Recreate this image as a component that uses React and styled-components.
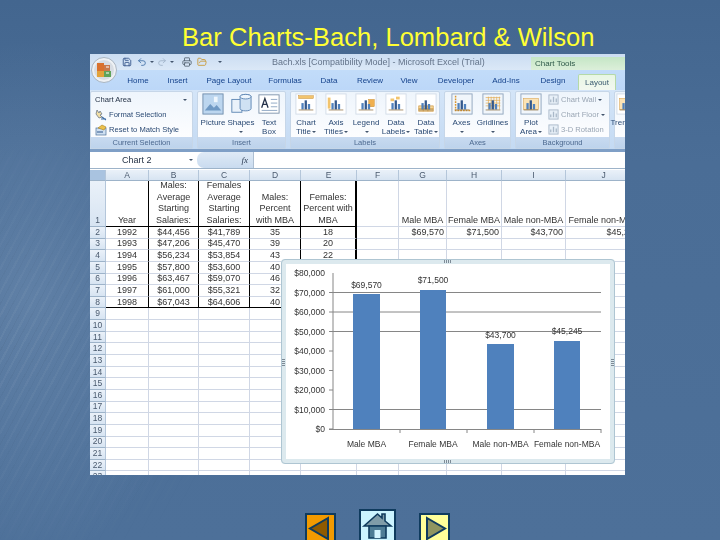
import React from "react";
import styled, { createGlobalStyle } from "styled-components";
import { Save, Undo2, Redo2, Printer, FolderOpen } from "lucide-react";

const GlobalStyle = createGlobalStyle`
  html, body {
    margin: 0;
    padding: 0;
    background: #4a6c95;
  }
`;

const Page = styled.div`
  position: relative;
  width: 720px;
  height: 540px;
  overflow: hidden;
  display: flex;
  flex-direction: column;
  font-family: "Liberation Sans", Arial, sans-serif;
  background-color: #4a6d96;
  background-image:
    radial-gradient(ellipse 170px 260px at 30px 300px, rgba(150, 175, 205, 0.28), rgba(150, 175, 205, 0) 100%),
    linear-gradient(180deg, #43668f 0%, #4a6d96 30%, #4d7099 100%);

  /* the streaks of the slide texture only show at the lower left */
  &::before {
    content: "";
    position: absolute;
    left: 0;
    top: 150px;
    width: 280px;
    height: 390px;
    background: repeating-linear-gradient(118deg, rgba(255, 255, 255, 0.05) 0 2px, rgba(255, 255, 255, 0) 2px 6px, rgba(0, 0, 0, 0.03) 6px 7px, rgba(255, 255, 255, 0) 7px 11px);
    -webkit-mask-image: radial-gradient(ellipse 100% 60% at 0% 50%, #000, transparent);
    mask-image: radial-gradient(ellipse 100% 60% at 0% 50%, #000, transparent);
  }
`;

const Title = styled.h1`
  margin: 0;
  height: 54px;
  flex: none;
  padding: 23px 0 0 182px;
  box-sizing: border-box;
  font-size: 25.6px;
  line-height: 28px;
  font-weight: 400;
  color: #ffff33;
  white-space: nowrap;
`;

const Window = styled.div`
  width: 535px;
  height: 421px;
  margin-left: 90px;
  position: relative;
  overflow: hidden;
  display: flex;
  flex-direction: column;
  flex: none;
  background: #fff;
  filter: blur(0.35px);
`;

const TitleBar = styled.div`
  height: 16px;
  flex: none;
  display: flex;
  align-items: center;
  padding-left: 32px;
  background: linear-gradient(180deg, #cbddf2, #dbe8f7);
  font-size: 9px;
  color: #64748a;
  white-space: nowrap;
`;

const QuickAccess = styled.div`
  display: flex;
  align-items: center;
  width: 150px;
  flex: none;
`;

const QatIcon = styled.span`
  display: flex;
  margin-left: ${(p) => p.$gap || 0}px;
`;

const DocName = styled.div`
  width: 259px;
  flex: none;
`;

const ToolsLabel = styled.div`
  align-self: stretch;
  flex: 1;
  margin-top: 3px;
  padding: 1px 0 0 4px;
  background: linear-gradient(180deg, #c5e6c6, #dcefd9);
  color: #2f5a4a;
  font-size: 8px;
  line-height: 12px;
`;

const TabRow = styled.div`
  height: 20px;
  flex: none;
  display: flex;
  align-items: flex-end;
  padding-left: 28px;
  background: linear-gradient(180deg, #c2dcf9, #bcd7f8);
`;

const Tab = styled.div`
  width: ${(p) => p.$w}px;
  height: ${(p) => (p.$active ? 16 : 20)}px;
  margin-left: ${(p) => p.$gap || 0}px;
  display: flex;
  align-items: center;
  justify-content: center;
  flex: none;
  box-sizing: border-box;
  font-size: 8px;
  color: #15428b;
  ${(p) =>
    p.$active &&
    `
    border: 1px solid #b5d9a8;
    border-bottom: none;
    border-radius: 2px 2px 0 0;
    background: linear-gradient(180deg, #e8f6e4, #f2f8f0);
    color: #3a5a70;
  `}
`;

const OfficeButton = styled.div`
  position: absolute;
  left: 1px;
  top: 3px;
  width: 26px;
  height: 26px;
`;

const Ribbon = styled.div`
  height: 58px;
  flex: none;
  display: flex;
  gap: 4px;
  padding: 1px 0 0 0;
  background: linear-gradient(180deg, #d4e5f8, #c4daf3);
`;

const Group = styled.div`
  width: ${(p) => p.$w}px;
  flex: none;
  display: flex;
  flex-direction: column;
  box-sizing: border-box;
  border: 1px solid #c6d6e8;
  border-radius: 2px;
  background: linear-gradient(180deg, #eef5fc, #f9fbfe 60%, #fff);
`;

const GroupBody = styled.div`
  flex: 1;
  display: flex;
  padding-left: ${(p) => p.$pad || 0}px;
`;

const GroupLabel = styled.div`
  height: 11px;
  flex: none;
  background: linear-gradient(180deg, #c8daf0, #bdd3ec);
  color: #4d6a90;
  font-size: 7.5px;
  line-height: 11px;
  text-align: center;
`;

const SmallColumn = styled.div`
  display: flex;
  flex-direction: column;
  gap: 2px;
  padding: 1px 0 0 ${(p) => p.$pad || 2}px;
`;

const SmallRow = styled.div`
  height: 13px;
  display: flex;
  align-items: center;
  gap: 2px;
  font-size: 7.6px;
  white-space: nowrap;
  color: ${(p) => (p.$muted ? "#9aa6b4" : "#2b4a74")};
`;

const AreaSelect = styled(SmallRow)`
  justify-content: space-between;
  width: 92px;
  color: #1e2c40;
`;

const BigButton = styled.div`
  width: ${(p) => p.$w}px;
  flex: none;
  display: flex;
  flex-direction: column;
  align-items: center;
  padding-top: 1px;
  font-size: 8px;
  line-height: 9px;
  color: #2b4a74;
  white-space: nowrap;
  svg {
    margin-bottom: 3px;
  }
`;

const Caret = styled.span`
  display: inline-block;
  width: 0;
  height: 0;
  flex: none;
  margin-left: ${(p) => p.$gap || 0}px;
  vertical-align: 1px;
  border-left: 2px solid transparent;
  border-right: 2px solid transparent;
  border-top: 2px solid #43556d;
`;

const FormulaBar = styled.div`
  height: 20px;
  flex: none;
  display: flex;
  box-sizing: border-box;
  border-top: 3px solid #7f9fc6;
  border-bottom: 1px solid #9db3c9;
  background: #fff;
`;

const NameBox = styled.div`
  width: 107px;
  flex: none;
  display: flex;
  align-items: center;
  justify-content: space-between;
  box-sizing: border-box;
  padding: 0 4px 0 32px;
  font-size: 9px;
  color: #1e2c40;
`;

const FormulaButtons = styled.div`
  width: 57px;
  flex: none;
  display: flex;
  align-items: center;
  justify-content: flex-end;
  box-sizing: border-box;
  padding-right: 5px;
  border-right: 1px solid #aebfd2;
  border-radius: 7px 0 0 7px;
  background: linear-gradient(180deg, #dfeaf6, #c9dbef);
  font-family: "Liberation Serif", serif;
  font-style: italic;
  font-size: 9px;
  color: #2e3e55;
`;

const Sheet = styled.div`
  position: relative;
  flex: 1;
  overflow: hidden;
  display: grid;
  grid-template-columns: 16px 43px 50px 51px 51px 56px 42px 48px 55px 64px 76px;
  grid-template-rows: 11px 46px;
  grid-auto-rows: 11.65px;
  margin-top: 1px;
  font-size: 9px;
  color: #333;
`;

const HeadCell = styled.div`
  box-sizing: border-box;
  display: flex;
  align-items: center;
  justify-content: center;
  overflow: hidden;
  border-right: 1px solid #b4c6da;
  border-bottom: 1px solid #9db3c9;
  background: ${(p) => (p.$corner ? "#a9c3e0" : "linear-gradient(180deg, #eaf1f9, #d7e4f2)")};
  color: #4a5a6e;
  font-size: 8.5px;
`;

const RowHead = styled(HeadCell)`
  align-items: ${(p) => (p.$tall ? "flex-end" : "center")};
  line-height: 11px;
`;

const Cell = styled.div`
  box-sizing: border-box;
  display: flex;
  align-items: center;
  justify-content: ${(p) => p.$align || "center"};
  padding: 0 ${(p) => (p.$align === "flex-end" ? 2 : 0)}px;
  white-space: nowrap;
  line-height: 11px;
  border-right: ${(p) => (p.$thick ? "2px solid #000" : p.$ruled ? "1px solid #000" : "1px solid #d0d7e5")};
  border-bottom: ${(p) => (p.$ruled === "bottom" ? "1px solid #000" : "1px solid #d0d7e5")};
`;

const HeaderCell = styled(Cell)`
  flex-direction: column;
  justify-content: flex-end;
  align-items: center;
  line-height: 11.4px;
  text-align: center;
`;

const ChartFrame = styled.div`
  position: absolute;
  left: 191px;
  top: 89px;
  width: 334px;
  height: 205px;
  box-sizing: border-box;
  border: 5px solid #dce9ee;
  outline: 1px solid #aec5d2;
  outline-offset: -1px;
  border-radius: 4px;
  background: #fff;
  svg {
    display: block;
  }
`;

const Handle = styled.span`
  position: absolute;
  ${(p) => p.$side}: -4px;
  ${(p) => (p.$side === "top" || p.$side === "bottom" ? "left: 50%; width: 8px; height: 3px; margin-left: -4px;" : "top: 50%; width: 3px; height: 8px; margin-top: -4px;")}
  background: repeating-linear-gradient(${(p) => (p.$side === "top" || p.$side === "bottom" ? "90deg" : "0deg")}, #7d8a96 0 1px, transparent 1px 2px);
`;

const NavRow = styled.div`
  display: flex;
  align-items: flex-start;
  gap: 23px;
  margin: 34px 0 0 305px;
  flex: none;
`;

const NavButton = styled.div`
  width: ${(p) => p.$size}px;
  height: ${(p) => p.$size}px;
  margin-top: ${(p) => p.$top || 0}px;
  flex: none;
  box-sizing: border-box;
  border: 2px solid #0f3b5e;
  background: ${(p) => p.$fill};
  svg {
    display: block;
  }
`;

const bars = (color = "#4f81bd") => (
  <>
    <rect x="7" y="11" width="2.5" height="7" fill={color} />
    <rect x="10.5" y="8" width="2.5" height="10" fill="#33588c" />
    <rect x="14" y="12" width="2.5" height="6" fill={color} />
  </>
);

const accents = {
  title: <rect x="4" y="3" width="16" height="3" fill="#f2c46d" stroke="#c78a2c" strokeWidth="0.5" />,
  axisTitles: <rect x="3" y="5" width="3" height="12" fill="#f2c46d" />,
  legend: <rect x="15" y="7" width="6" height="8" fill="#f0b04f" stroke="#c78a2c" strokeWidth="0.5" />,
  dataLabels: (
    <>
      <rect x="6" y="6" width="4" height="3" fill="#f2c46d" />
      <rect x="12" y="4" width="4" height="3" fill="#f2c46d" />
    </>
  ),
  dataTable: <path d="M4 14h16v6H4zM4 17h16M9 14v6M14 14v6" fill="#f6d79b" stroke="#c78a2c" strokeWidth="0.6" />,
  axes: <path d="M5 3v16h16" fill="none" stroke="#d9962f" strokeWidth="1.6" strokeDasharray="2 1" />,
  gridlines: <path d="M4 5h16M4 8h16M4 11h16M4 14h16M7 4v14M10 4v14M13 4v14M16 4v14M19 4v14" stroke="#e2ad57" strokeWidth="0.8" />,
  plotArea: <rect x="4" y="6" width="16" height="12" fill="#fbe3b5" stroke="#d9a14a" strokeWidth="0.6" />,
};

const ChartGlyph = ({ kind, boxed }) => (
  <svg width="22" height="22" viewBox="0 0 24 24">
    <rect x="1" y="1" width="22" height="22" fill={boxed ? "#f1f6fb" : "#fff"} stroke={boxed ? "#8fa4bd" : "#d3dde8"} />
    {accents[kind]}
    {bars()}
    <path d="M4 18.5h16" stroke="#8a6a3a" strokeWidth="0.8" />
  </svg>
);

const PictureGlyph = () => (
  <svg width="22" height="22" viewBox="0 0 24 24">
    <rect x="1" y="1" width="22" height="22" fill="#bcd6ef" stroke="#6f8cab" />
    <path d="M3 19l6-7 4 4 3-3 5 6z" fill="#6f99c4" />
    <rect x="13" y="4" width="4" height="6" fill="#eef6fd" />
  </svg>
);

const ShapesGlyph = () => (
  <svg width="22" height="22" viewBox="0 0 24 24">
    <rect x="2" y="7" width="11" height="14" fill="#eaf2fa" stroke="#5d86b3" />
    <path d="M11 4a6 2.5 0 0 1 12 0v13a6 2.5 0 0 1-12 0z" fill="#cfe1f3" stroke="#5d86b3" />
    <ellipse cx="17" cy="4" rx="6" ry="2.5" fill="#eef6fd" stroke="#5d86b3" />
  </svg>
);

const TextBoxGlyph = () => (
  <svg width="22" height="22" viewBox="0 0 24 24">
    <rect x="1" y="2" width="22" height="20" fill="#fff" stroke="#7e93ab" />
    <path d="M4 16l3.5-10L11 16M5 12.5h5" fill="none" stroke="#25324a" strokeWidth="1.4" />
    <path d="M14 7h7M14 11h7M14 15h7M4 19h17" stroke="#8ba4c2" />
  </svg>
);

const SmallGlyph = ({ tone }) => (
  <svg width="11" height="11" viewBox="0 0 12 12">
    <rect x="1" y="1" width="10" height="10" fill="#e8f0f8" stroke={tone} />
    <path d="M3 9V6M6 9V3M9 9V5" stroke={tone} strokeWidth="1.4" />
  </svg>
);

const BrushGlyph = () => (
  <svg width="12" height="12" viewBox="0 0 12 12">
    <path d="M2 1l2 3 1-2 2 3-2 1 2 2-3 1-3-4z" fill="#f2dfa6" stroke="#5d6c80" strokeWidth="0.7" />
    <path d="M7 8l4 3M6 10h5" stroke="#3f6ea5" strokeWidth="1.1" />
  </svg>
);

const ResetGlyph = () => (
  <svg width="12" height="12" viewBox="0 0 12 12">
    <rect x="1" y="4" width="10" height="7" fill="#cfe0f2" stroke="#4d6f99" strokeWidth="0.7" />
    <path d="M3 4l4-3 4 2-2 3z" fill="#ecc14d" stroke="#a77f1f" strokeWidth="0.6" />
    <path d="M2 8h6" stroke="#2f558a" />
  </svg>
);

const OfficeLogo = () => (
  <svg width="26" height="26" viewBox="0 0 26 26">
    <circle cx="13" cy="13" r="12.5" fill="#eef1f4" stroke="#a9b5c2" />
    <circle cx="13" cy="13" r="10" fill="#d8dde4" />
    <rect x="6" y="6" width="7" height="8" fill="#d9712e" />
    <rect x="6" y="14" width="7" height="6" fill="#e2a23a" />
    <rect x="13" y="8" width="6" height="6" fill="#c9794b" />
    <rect x="13" y="14" width="7" height="6" fill="#5fa35a" />
    <path d="M15 10h3M15 16h3" stroke="#fff" />
  </svg>
);

const Arrow = ({ flip }) => (
  <svg width="27" height="27" viewBox="0 0 27 27">
    <path
      d={flip ? "M6 3L24 13.5 6 24z" : "M21 3L3 13.5 21 24z"}
      fill={flip ? "#8f9560" : "#8f5a00"}
      stroke="#0f3b5e"
      strokeWidth="2"
    />
  </svg>
);

const HouseGlyph = () => (
  <svg width="33" height="33" viewBox="0 0 33 33">
    <path d="M3 15L16.5 3l4.5 4V3h3v7l6 5z" fill="#7f9ca8" stroke="#0f3b5e" strokeWidth="1.6" />
    <path d="M8 15h17v12H8z" fill="#4f7d96" stroke="#0f3b5e" strokeWidth="1.6" />
    <rect x="13.5" y="19" width="6" height="8" fill="#d6f5ff" />
  </svg>
);

const labelButtons = [
  { kind: "title", lines: ["Chart", "Title"] },
  { kind: "axisTitles", lines: ["Axis", "Titles"] },
  { kind: "legend", lines: ["Legend", ""] },
  { kind: "dataLabels", lines: ["Data", "Labels"] },
  { kind: "dataTable", lines: ["Data", "Table"] },
];

const tabs = [
  ["Home", 40],
  ["Insert", 39],
  ["Page Layout", 64],
  ["Formulas", 48],
  ["Data", 40],
  ["Review", 42],
  ["View", 36],
  ["Developer", 58],
  ["Add-Ins", 42],
];

const columns = ["A", "B", "C", "D", "E", "F", "G", "H", "I", "J"];

const heads = [
  ["Year"],
  ["Males:", "Average", "Starting", "Salaries:"],
  ["Females", "Average", "Starting", "Salaries:"],
  ["Males:", "Percent", "with MBA"],
  ["Females:", "Percent with", "MBA"],
];

// the chart hides the last column from 1995 down
const rows = [
  ["1992", "$44,456", "$41,789", "35", "18"],
  ["1993", "$47,206", "$45,470", "39", "20"],
  ["1994", "$56,234", "$53,854", "43", "22"],
  ["1995", "$57,800", "$53,600", "40", ""],
  ["1996", "$63,467", "$59,070", "46", ""],
  ["1997", "$61,000", "$55,321", "32", ""],
  ["1998", "$67,043", "$64,606", "40", ""],
];

const pivotHeads = ["Male MBA", "Female MBA", "Male non-MBA", "Female non-MBA"];
const pivotValues = ["$69,570", "$71,500", "$43,700", "$45,245"];

const yLabels = [
  ["$80,000", 272],
  ["$70,000", 291.5],
  ["$60,000", 311],
  ["$50,000", 330.5],
  ["$40,000", 350],
  ["$30,000", 369.5],
  ["$20,000", 389],
  ["$10,000", 408.5],
  ["$0", 428],
];

const chartBars = [
  { x: 353, w: 27, top: 293, value: "$69,570", valueY: 287, name: "Male MBA" },
  { x: 420, w: 26, top: 289, value: "$71,500", valueY: 282, name: "Female MBA" },
  { x: 487, w: 27, top: 343, value: "$43,700", valueY: 337, name: "Male non-MBA" },
  { x: 554, w: 26, top: 340, value: "$45,245", valueY: 333, name: "Female non-MBA" },
];

const BarChart = () => (
  <svg width="324" height="195" viewBox="286 263 324 195" fontFamily="Liberation Sans, Arial, sans-serif" fontSize="8.5" fill="#333">
    {[291.5, 311, 330.5, 408.5].map((y) => (
      <line key={y} x1="333" x2="601" y1={y} y2={y} stroke="#868686" strokeWidth="1" />
    ))}
    {yLabels.slice(1).map(([, y]) => (
      <line key={y} x1="329" x2="333" y1={y} y2={y} stroke="#868686" />
    ))}
    <line x1="333" x2="333" y1="272" y2="428" stroke="#868686" />
    <line x1="329" x2="601" y1="428.5" y2="428.5" stroke="#868686" />
    {[400, 467, 534, 601].map((x) => (
      <line key={x} x1={x} x2={x} y1="428" y2="432" stroke="#868686" />
    ))}
    {yLabels.map(([text, y]) => (
      <text key={text} x="325" y={y + 3} textAnchor="end">
        {text}
      </text>
    ))}
    {chartBars.map((b) => (
      <g key={b.name}>
        <rect x={b.x} y={b.top} width={b.w} height={428 - b.top} fill="#4f81bd" />
        <text x={b.x + b.w / 2} y={b.valueY} textAnchor="middle">
          {b.value}
        </text>
        <text x={b.x + b.w / 2} y="446" textAnchor="middle">
          {b.name}
        </text>
      </g>
    ))}
  </svg>
);

const EmptyRow = ({ n }) => (
  <>
    <RowHead>{n}</RowHead>
    {columns.map((c) => (
      <Cell key={c} />
    ))}
  </>
);

const App = () => (
  <Page>
    <GlobalStyle />
    <Title>Bar Charts-Bach, Lombard &amp; Wilson</Title>
    <Window>
      <OfficeButton>
        <OfficeLogo />
      </OfficeButton>
      <TitleBar>
        <QuickAccess>
          <QatIcon>
            <Save size={10} color="#2f4f86" />
          </QatIcon>
          <QatIcon $gap={5}>
            <Undo2 size={10} color="#3f6ea5" />
          </QatIcon>
          <Caret $gap={3} />
          <QatIcon $gap={3}>
            <Redo2 size={10} color="#9fb2c8" />
          </QatIcon>
          <Caret $gap={3} />
          <QatIcon $gap={8}>
            <Printer size={10} color="#51606f" />
          </QatIcon>
          <QatIcon $gap={5}>
            <FolderOpen size={10} color="#c9962f" />
          </QatIcon>
          <Caret $gap={11} />
        </QuickAccess>
        <DocName>Bach.xls [Compatibility Mode] - Microsoft Excel (Trial)</DocName>
        <ToolsLabel>Chart Tools</ToolsLabel>
      </TitleBar>
      <TabRow>
        {tabs.map(([name, w]) => (
          <Tab key={name} $w={w}>
            {name}
          </Tab>
        ))}
        <Tab $w={44} $gap={4}>
          Design
        </Tab>
        <Tab $w={38} $gap={3} $active>
          Layout
        </Tab>
      </TabRow>
      <Ribbon>
        <Group $w={103}>
          <GroupBody>
            <SmallColumn $pad={4}>
              <AreaSelect>
                Chart Area
                <Caret />
              </AreaSelect>
              <SmallRow>
                <BrushGlyph />
                Format Selection
              </SmallRow>
              <SmallRow>
                <ResetGlyph />
                Reset to Match Style
              </SmallRow>
            </SmallColumn>
          </GroupBody>
          <GroupLabel>Current Selection</GroupLabel>
        </Group>
        <Group $w={89}>
          <GroupBody $pad={1}>
            <BigButton $w={28}>
              <PictureGlyph />
              Picture
            </BigButton>
            <BigButton $w={28}>
              <ShapesGlyph />
              Shapes
              <span>
                <Caret />
              </span>
            </BigButton>
            <BigButton $w={28}>
              <TextBoxGlyph />
              Text
              <span>Box</span>
            </BigButton>
          </GroupBody>
          <GroupLabel>Insert</GroupLabel>
        </Group>
        <Group $w={150}>
          <GroupBody>
            {labelButtons.map(({ kind, lines }) => (
              <BigButton key={kind} $w={30}>
                <ChartGlyph kind={kind} />
                {lines[0]}
                <span>
                  {lines[1]}
                  <Caret $gap={1} />
                </span>
              </BigButton>
            ))}
          </GroupBody>
          <GroupLabel>Labels</GroupLabel>
        </Group>
        <Group $w={67}>
          <GroupBody $pad={1}>
            <BigButton $w={31}>
              <ChartGlyph kind="axes" boxed />
              Axes
              <span>
                <Caret />
              </span>
            </BigButton>
            <BigButton $w={31}>
              <ChartGlyph kind="gridlines" boxed />
              Gridlines
              <span>
                <Caret />
              </span>
            </BigButton>
          </GroupBody>
          <GroupLabel>Axes</GroupLabel>
        </Group>
        <Group $w={95}>
          <GroupBody>
            <BigButton $w={30}>
              <ChartGlyph kind="plotArea" boxed />
              Plot
              <span>
                Area
                <Caret $gap={1} />
              </span>
            </BigButton>
            <SmallColumn>
              <SmallRow $muted>
                <SmallGlyph tone="#a9b8c8" />
                Chart Wall
                <Caret />
              </SmallRow>
              <SmallRow $muted>
                <SmallGlyph tone="#a9b8c8" />
                Chart Floor
                <Caret />
              </SmallRow>
              <SmallRow $muted>
                <SmallGlyph tone="#a9b8c8" />
                3-D Rotation
              </SmallRow>
            </SmallColumn>
          </GroupBody>
          <GroupLabel>Background</GroupLabel>
        </Group>
        <Group $w={30}>
          <GroupBody>
            <BigButton $w={24}>
              <ChartGlyph kind="plotArea" />
              Trendline
            </BigButton>
          </GroupBody>
          <GroupLabel />
        </Group>
      </Ribbon>
      <FormulaBar>
        <NameBox>
          Chart 2
          <Caret />
        </NameBox>
        <FormulaButtons>fx</FormulaButtons>
      </FormulaBar>
      <Sheet>
        <HeadCell $corner />
        {columns.map((c) => (
          <HeadCell key={c}>{c}</HeadCell>
        ))}

        <RowHead $tall>1</RowHead>
        {heads.map((lines, i) => (
          <HeaderCell key={lines[0] + i} $ruled="bottom" $thick={i === 4}>
            {lines.map((l) => (
              <span key={l}>{l}</span>
            ))}
          </HeaderCell>
        ))}
        <Cell />
        {pivotHeads.map((h) => (
          <HeaderCell key={h}>{h}</HeaderCell>
        ))}

        {rows.map((row, r) => (
          <React.Fragment key={row[0]}>
            <RowHead>{r + 2}</RowHead>
            {row.map((v, i) => (
              <Cell key={i} $ruled={r === 6 ? "bottom" : true} $thick={i === 4}>
                {v}
              </Cell>
            ))}
            <Cell />
            {pivotValues.map((v) => (
              <Cell key={v} $align="flex-end">
                {r === 0 ? v : ""}
              </Cell>
            ))}
          </React.Fragment>
        ))}

        {Array.from({ length: 15 }, (_, i) => (
          <EmptyRow key={i} n={i + 9} />
        ))}

        <ChartFrame>
          <Handle $side="top" />
          <Handle $side="bottom" />
          <Handle $side="left" />
          <Handle $side="right" />
          <BarChart />
        </ChartFrame>
      </Sheet>
    </Window>
    <NavRow>
      <NavButton $size={31} $top={4} $fill="#f29a00">
        <Arrow />
      </NavButton>
      <NavButton $size={37} $fill="#ccf4ff">
        <HouseGlyph />
      </NavButton>
      <NavButton $size={31} $top={4} $fill="#ffff99">
        <Arrow flip />
      </NavButton>
    </NavRow>
  </Page>
);

export default App;
